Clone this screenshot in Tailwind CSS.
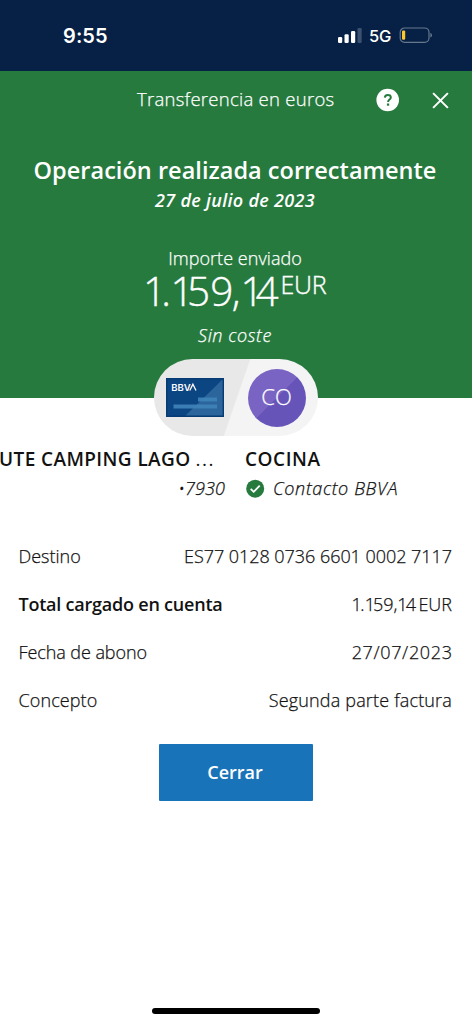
<!DOCTYPE html>
<html lang="es">
<head>
<meta charset="utf-8">
<title>Transferencia en euros</title>
<script src="https://cdn.jsdelivr.net/npm/@tailwindcss/browser@4"></script>
</head>
<body class="bg-white">
<div class="flex h-[1024px] w-[472px] flex-col overflow-hidden bg-white font-['Open_Sans',sans-serif] text-[18px] font-light text-[#121212]">
  <div class="flex h-[71px] shrink-0 items-center bg-[#072146] pl-[63px] font-['Inter',sans-serif] text-white">
    <span class="w-[274px] text-[20px] leading-[70px] font-semibold tracking-[0.1px]">9:55</span>
    <svg class="h-[16px] w-[25px]" viewBox="0 0 25 16"><g fill="#fff"><rect x="1" y="9" width="4.2" height="6" rx="1.2"/><rect x="7.5" y="6.3" width="4.2" height="8.7" rx="1.2"/><rect x="14" y="3" width="4.2" height="12" rx="1.2"/></g><rect x="20.5" y="0" width="4.2" height="15" rx="1.2" fill="#3c506f"/></svg>
    <span class="mt-px ml-[7px] w-[24px] text-[16.5px] font-medium tracking-[-0.3px]">5G</span>
    <svg class="ml-[6px] h-[17px] w-[34px]" viewBox="0 0 34 17"><rect x="1.2" y="1" width="28.8" height="14.4" rx="4.4" fill="none" stroke="#66788c" stroke-width="1.2"/><rect x="3" y="3.4" width="3.2" height="9.4" rx="1.2" fill="#fbc92f"/><path d="M31.4 5.8Q33 6.5 33 8.2T31.4 10.6Z" fill="#66788c"/></svg>
  </div>
  <header class="flex h-[327px] shrink-0 flex-col items-center bg-[#277a3e] text-white">
    <div class="flex h-[57px] w-full items-center pl-[137px]">
      <h1 class="-mt-[2px] w-[239px] text-[18.5px] leading-[56px] tracking-[0.27px] whitespace-nowrap [-webkit-text-stroke:0.25px]">Transferencia en euros</h1>
      <svg class="mt-px h-[24px] w-[24px]" viewBox="0 0 24 24"><circle cx="11.7" cy="12" r="11.3" fill="#fff"/><path d="M8.8 9.6C9 7.9 10.1 7 11.8 7c1.8 0 3 .9 3 2.4 0 2.2-2.7 2.1-2.7 4.5" fill="none" stroke="#277a3e" stroke-width="2"/><rect x="10.9" y="15.5" width="2.3" height="2.2" fill="#277a3e"/></svg>
      <svg class="mt-px ml-[32px] h-[17px] w-[17px]" viewBox="0 0 17 17"><path d="M1.1 1.1 15.9 15.9M15.9 1.1 1.1 15.9" stroke="#fff" stroke-width="2" fill="none"/></svg>
    </div>
    <h2 class="mt-[27px] -ml-[2px] text-[23.5px] leading-[30px] font-semibold tracking-[0.03px] whitespace-nowrap">Operación realizada correctamente</h2>
    <p class="mt-[5px] -ml-[2px] text-[18px] leading-[20px] font-semibold tracking-[0.3px] italic">27 de julio de 2023</p>
    <p class="mt-[38px] -ml-[2px] text-[18px] leading-[20px] tracking-[0.05px] [-webkit-text-stroke:0.25px]">Importe enviado</p>
    <div class="mt-[3px] flex h-[40px] w-[472px] items-start pl-[143px] [-webkit-text-stroke:0.4px]">
      <span class="w-[137.5px] text-[40.5px] leading-[40px] whitespace-nowrap"><span class="tracking-[-5px]">1</span><span class="tracking-[-0.4px]">.</span><span class="tracking-[-6.5px]">1</span>5<span class="tracking-[-1.5px]">9</span>,<span class="tracking-[-8px]">1</span>4</span>
      <span class="text-[25px] leading-[26px] tracking-[-0.3px]">EUR</span>
    </div>
    <p class="mt-[14px] -ml-[2px] text-[18px] leading-[20px] tracking-[0.6px] italic [-webkit-text-stroke:0.25px]">Sin coste</p>
  </header>
  <div class="z-10 -mt-[39px] flex h-[77px] w-[164px] shrink-0 items-center self-center rounded-full bg-[linear-gradient(109deg,#e8e8e8_50.2%,#f4f4f4_50.9%)]">
    <svg class="ml-[12px] h-[39px] w-[58px]" viewBox="0 0 58 39"><path d="M0 0h58v39H0z" fill="#0b4582"/><path d="M58 0v39H18z" fill="#2b659b"/><path d="M32 19.5h19v4H32zM7.5 26.5H51v4H7.5z" fill="#3e83b9" opacity=".9"/><path d="M.7.7h56.6v37.6H.7z" fill="none" stroke="#063b73" stroke-width="1.4"/><text x="5.2" y="12.6" font-family="Inter,sans-serif" font-size="9" font-weight="600" fill="#fff" textLength="19.5" lengthAdjust="spacingAndGlyphs">BBV</text><path d="M23.8 12.5 26.9 6.3 30 12.5" fill="none" stroke="#fff" stroke-width="1.3"/></svg>
    <span class="ml-[23.5px] flex h-[58px] w-[58px] items-center justify-center rounded-full bg-[linear-gradient(135deg,#7a64c3_50%,#6754b8_50%)] pb-[2px] text-[22px] text-white [-webkit-text-stroke:0.25px]">CO</span>
  </div>
  <div class="mt-[10px] flex h-[27px] shrink-0 items-center text-[19px] font-semibold whitespace-nowrap text-[#121212]">
    <span class="-ml-px w-[246px]"><span class="tracking-[0.4px]">UTE CAMPING LAGO</span> <span class="font-normal tracking-[1.5px]">...</span></span>
    <span class="tracking-[0.55px]">COCINA</span>
  </div>
  <div class="mt-[3px] flex h-[24px] shrink-0 items-center italic [-webkit-text-stroke:0.25px]">
    <span class="w-[225px] text-right tracking-[0.1px]">•7930</span>
    <svg class="ml-[21px] h-[19px] w-[19px]" viewBox="0 0 19 19"><circle cx="9.2" cy="9.7" r="9" fill="#277a3e"/><path d="m4.7 9.8 3 3 6-6.2" fill="none" stroke="#fff" stroke-width="1.8"/></svg>
    <span class="ml-[8px] tracking-[0.65px]">Contacto BBVA</span>
  </div>
  <dl class="mt-[32px] flex shrink-0 flex-col pr-[20px] pl-[18.5px] leading-[48px] whitespace-nowrap [-webkit-text-stroke:0.25px]">
    <div class="flex h-[48px] justify-between"><dt>Destino</dt><dd class="tracking-[-0.04px]">ES77 0128 0736 6601 0002 7117</dd></div>
    <div class="flex h-[48px] justify-between"><dt class="font-semibold tracking-[-0.22px] [-webkit-text-stroke:0]">Total cargado en cuenta</dt><dd class="flex"><span><span class="tracking-[-1.5px]">1</span>.<span class="tracking-[-2px]">1</span>59,<span class="tracking-[-2px]">1</span>4</span><span class="ml-[2.5px]">EUR</span></dd></div>
    <div class="flex h-[48px] justify-between"><dt class="tracking-[-0.08px]">Fecha de abono</dt><dd class="-mr-[0.6px] tracking-[0.65px]">27/07/2023</dd></div>
    <div class="flex h-[48px] justify-between"><dt class="tracking-[0.1px]">Concepto</dt><dd class="tracking-[0.17px]">Segunda parte factura</dd></div>
  </dl>
  <button class="mt-[20px] ml-[159px] h-[57px] w-[154px] shrink-0 rounded-[1px] bg-[#1973b8] pr-[2px] text-[18px] font-semibold text-white">Cerrar</button>
  <div class="mt-auto mr-px mb-[10px] h-[6px] w-[168px] shrink-0 self-center rounded-full bg-black"></div>
</div>
</body>
</html>
